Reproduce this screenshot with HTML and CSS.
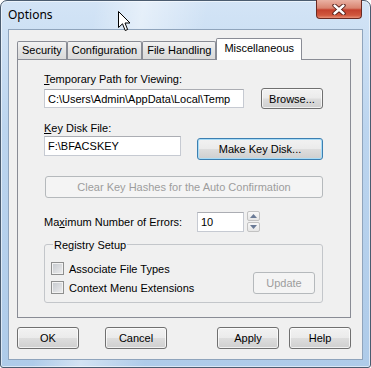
FILE: index.html
```html
<!DOCTYPE html>
<html lang="en">
<head>
    <meta charset="UTF-8">
    <title>Options</title>
    <link rel="stylesheet" href="styles.css">
</head>
<body>
    <div class="window">
        <div class="titlebar">
            <span class="title">Options</span>
            <div class="close">
                <svg width="14" height="11" viewBox="0 0 14 11">
                    <path d="M2.5 1.5 L11.5 9.5 M11.5 1.5 L2.5 9.5" stroke="#4a1510" stroke-width="4.2" stroke-linecap="round"/>
                    <path d="M2.5 1.5 L11.5 9.5 M11.5 1.5 L2.5 9.5" stroke="#fff" stroke-width="2.4" stroke-linecap="round"/>
                </svg>
            </div>
        </div>
        <div class="client">
            <div class="tabs">
                <div class="tab">Security</div>
                <div class="tab">Configuration</div>
                <div class="tab">File Handling</div>
                <div class="tab active">Miscellaneous</div>
            </div>
            <div class="panel">
                <div class="label"><u>T</u>emporary Path for Viewing:</div>
                <div class="row">
                    <input class="text path" type="text" value="C:\Users\Admin\AppData\Local\Temp">
                    <button class="btn browse">Browse...</button>
                </div>

                <div class="label key-label"><u>K</u>ey Disk File:</div>
                <div class="row top">
                    <input class="text keyfile" type="text" value="F:\BFACSKEY">
                    <button class="btn focused makekey">Make Key Disk...</button>
                </div>

                <button class="btn disabled clear" disabled>Clear Key Hashes for the Auto Confirmation</button>

                <div class="errors">
                    <span class="errors-label">Ma<u>x</u>imum Number of Errors:</span>
                    <input class="text count" type="text" value="10">
                    <div class="spin">
                        <span><svg width="7" height="4" viewBox="0 0 7 4"><path d="M0 4 L3.5 0 L7 4 Z" fill="#6a7a96"/></svg></span>
                        <span><svg width="7" height="4" viewBox="0 0 7 4"><path d="M0 0 L3.5 4 L7 0 Z" fill="#6a7a96"/></svg></span>
                    </div>
                </div>

                <div class="group">
                    <span class="group-title">Registry Setup</span>
                    <div class="group-body">
                        <div class="checks">
                            <label class="check"><span class="box"></span>Associate File Types</label>
                            <label class="check"><span class="box"></span>Context Menu Extensions</label>
                        </div>
                        <button class="btn disabled update" disabled>Update</button>
                    </div>
                </div>
            </div>
            <div class="actions">
                <button class="btn">OK</button>
                <button class="btn cancel">Cancel</button>
                <button class="btn apply">Apply</button>
                <button class="btn help">Help</button>
            </div>
        </div>
        <svg class="cursor" width="13" height="21" viewBox="0 0 13 21">
            <path d="M0.5 0.5 L0.5 16.5 L4.5 12.8 L7.2 19.5 L9.6 18.5 L7 12 L12 12 Z" fill="#fff" stroke="#000" stroke-width="1" stroke-linejoin="round"/>
        </svg>
    </div>
</body>
</html>
```

FILE: styles.css
```css
body {
    margin: 0;
    font-family: "Liberation Sans", Arial, sans-serif;
    font-size: 11px;
    color: #000;
    background: #fff;
}
.window {
    position: relative;
    width: 371px;
    height: 368px;
    box-sizing: border-box;
    border: 1px solid #4b5c70;
    border-radius: 7px 7px 3px 3px;
    padding: 0 7px 7px 7px;
    display: flex;
    flex-direction: column;
    background:
        linear-gradient(100deg, rgba(255,255,255,0) 22%, rgba(255,255,255,0.45) 33%, rgba(255,255,255,0) 48%),
        linear-gradient(#d3e4f6, #bcd5ef 35%, #aecbe9);
    box-shadow: inset 0 0 0 1px rgba(255,255,255,0.55);
}
.titlebar {
    height: 28px;
    display: flex;
    align-items: flex-start;
}
.title {
    margin-top: 6px;
    font-family: "Noto Sans", sans-serif;
    font-size: 12px;
    line-height: 16px;
}
.close {
    margin-left: auto;
    margin-right: 1px;
    margin-top: -1px;
    width: 46px;
    height: 19px;
    box-sizing: border-box;
    border: 1px solid #6a2a22;
    border-top: none;
    border-radius: 0 0 4px 4px;
    background: linear-gradient(#eab2a4 0, #d98470 45%, #c4412e 55%, #d0583e 85%, #e89078 100%);
    display: flex;
    align-items: center;
    justify-content: center;
}
.client {
    height: 331px;
    box-sizing: border-box;
    border: 1px solid #8fa4bc;
    background: #f0f0f0;
    padding: 8px 11px 10px 8px;
    display: flex;
    flex-direction: column;
}
.tabs {
    display: flex;
    align-items: flex-end;
    height: 22px;
    margin-bottom: -1px;
    position: relative;
    z-index: 1;
}
.tab {
    height: 18px;
    box-sizing: border-box;
    margin-bottom: 1px;
    padding: 0 4px;
    line-height: 16px;
    border: 1px solid #898c95;
    border-bottom: none;
    border-radius: 2px 2px 0 0;
    background: linear-gradient(#f3f3f3, #e3e3e3 50%, #dadada);
}
.tab.active {
    height: 22px;
    margin-bottom: 0;
    line-height: 18px;
    padding: 0 7px;
    background: #fff;
}
.panel {
    flex: 1;
    border: 1px solid #898c95;
    background: #f0f0f0;
    padding: 13px 27px 0 26px;
    display: flex;
    flex-direction: column;
}
.label {
    line-height: 13px;
}
.key-label {
    margin-top: 13px;
}
.row {
    display: flex;
    align-items: center;
    justify-content: space-between;
    margin-top: 2px;
}
.row.top {
    align-items: flex-start;
    margin-top: 1px;
}
.text {
    height: 20px;
    box-sizing: border-box;
    border: 1px solid #c6cad2;
    border-top-color: #abadb3;
    padding: 0 3px;
    font: inherit;
    background: #fff;
    color: #000;
}
.path {
    width: 200px;
    height: 19px;
}
.keyfile {
    width: 137px;
}
.btn {
    height: 22px;
    box-sizing: border-box;
    border: 1px solid #707070;
    border-radius: 3px;
    padding: 0;
    font: inherit;
    color: #000;
    background: linear-gradient(#f2f2f2 0, #ebebeb 48%, #dddddd 52%, #cfcfcf 100%);
    box-shadow: inset 0 0 0 1px rgba(255,255,255,0.7);
}
.btn.focused {
    border-color: #3c7fb1;
    box-shadow: inset 0 0 0 1px #a8dcf7;
}
.btn.disabled {
    border-color: #b5b9bc;
    background: #f4f4f4;
    color: #9d9d9d;
    box-shadow: none;
}
.browse {
    width: 62px;
    height: 21px;
}
.makekey {
    width: 126px;
    margin-top: 2px;
}
.clear {
    margin-top: 16px;
    margin-left: 1px;
}
.errors {
    display: flex;
    align-items: center;
    margin-top: 13px;
}
.errors-label {
    width: 153px;
}
.count {
    width: 47px;
}
.spin {
    display: flex;
    flex-direction: column;
    gap: 1px;
    width: 13px;
    height: 21px;
    margin-left: 3px;
}
.spin span {
    flex: 1;
    border: 1px solid #c2c2c2;
    border-radius: 2px;
    background: linear-gradient(#f8f8f8, #e6e6e6);
    display: flex;
    align-items: center;
    justify-content: center;
}
.group {
    margin-top: 12px;
    border: 1px solid #c3c6ca;
    border-radius: 3px;
    padding: 0 7px 8px 6px;
    display: flex;
    flex-direction: column;
}
.group-title {
    align-self: flex-start;
    margin: -6px 0 0 2px;
    padding: 0 1px;
    line-height: 13px;
    background: #f0f0f0;
}
.group-body {
    display: flex;
    justify-content: space-between;
    align-items: flex-end;
    margin-top: 10px;
}
.checks {
    display: flex;
    flex-direction: column;
    gap: 6px;
}
.check {
    display: flex;
    align-items: center;
    gap: 5px;
    height: 13px;
}
.box {
    width: 13px;
    height: 13px;
    box-sizing: border-box;
    border: 1px solid #8e8f8f;
    background: linear-gradient(135deg, #c4c8cd, #eeeeef);
    box-shadow: inset 0 0 0 1px #f2f2f2;
}
.update {
    width: 62px;
}
.actions {
    display: flex;
    margin-top: 9px;
}
.actions .btn {
    width: 62px;
}
.cancel {
    margin-left: 26px;
}
.apply {
    margin-left: auto;
}
.help {
    margin-left: 10px;
}
.cursor {
    position: absolute;
    left: 117px;
    top: 10px;
    z-index: 2;
}
```
